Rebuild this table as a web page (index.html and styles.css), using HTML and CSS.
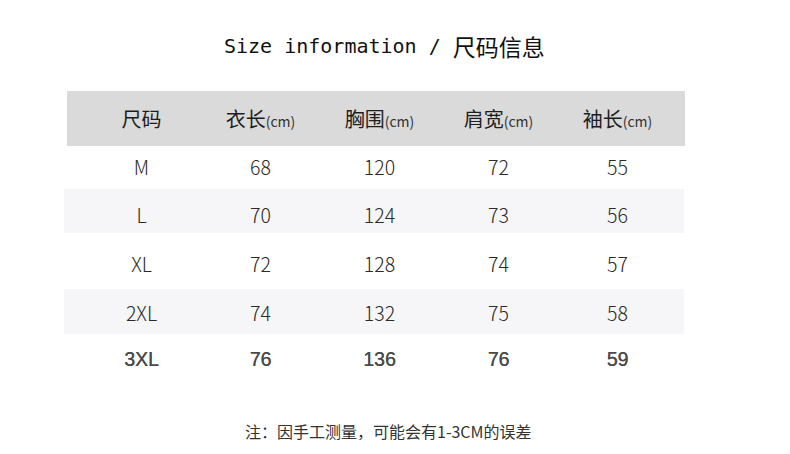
FILE: index.html
```html
<!DOCTYPE html>
<html lang="zh">
<head>
<meta charset="utf-8">
<link rel="stylesheet" href="styles.css">
</head>
<body>
<div class="page">
  <h1 class="title"><span class="latin">Size information / </span><span class="cjk">尺码信息</span></h1>
  <div class="table">
    <div class="row head">
      <div class="cell">尺码</div>
      <div class="cell">衣长<small>(cm)</small></div>
      <div class="cell">胸围<small>(cm)</small></div>
      <div class="cell">肩宽<small>(cm)</small></div>
      <div class="cell">袖长<small>(cm)</small></div>
    </div>
    <div class="row r1"><div class="cell">M</div><div class="cell">68</div><div class="cell">120</div><div class="cell">72</div><div class="cell">55</div></div>
    <div class="row r2 alt"><div class="cell">L</div><div class="cell">70</div><div class="cell">124</div><div class="cell">73</div><div class="cell">56</div></div>
    <div class="row r3"><div class="cell">XL</div><div class="cell">72</div><div class="cell">128</div><div class="cell">74</div><div class="cell">57</div></div>
    <div class="row r4 alt"><div class="cell">2XL</div><div class="cell">74</div><div class="cell">132</div><div class="cell">75</div><div class="cell">58</div></div>
    <div class="row r5 last"><div class="cell">3XL</div><div class="cell">76</div><div class="cell">136</div><div class="cell">76</div><div class="cell">59</div></div>
  </div>
  <p class="note">注：因手工测量，可能会有1-3CM的误差</p>
</div>
</body>
</html>
```

FILE: styles.css
```css
* { box-sizing: border-box; }
html, body { margin: 0; padding: 0; background: #fff; }
.page {
  width: 790px;
  height: 454px;
  padding-top: 30px;
  font-family: "Noto Sans CJK SC", "Noto Sans", sans-serif;
  color: #222;
}
.title {
  margin: 0;
  padding-left: 224px;
  height: 32px;
  line-height: 32px;
  font-weight: normal;
  white-space: pre;
  display: flex;
  align-items: center;
}
.title .latin {
  font-family: "DejaVu Sans Mono", monospace;
  font-size: 20px;
  color: #111;
}
.title .cjk {
  font-family: "Noto Sans CJK SC", sans-serif;
  font-size: 23px;
  color: #111;
}
.table {
  margin-top: 29px;
  margin-left: 64px;
  width: 620px;
}
.row {
  display: grid;
  grid-template-columns: repeat(5, 119px);
  padding-left: 18px;
  align-items: center;
}
.cell {
  text-align: center;
  white-space: nowrap;
}
.head {
  height: 55px;
  background: #dadada;
  margin-left: 3px;
  margin-right: -1px;
  padding-left: 15px;
  font-size: 20px;
  color: #1e1e1e;
}
.head small {
  font-size: 14px;
  color: #333;
}
.r1, .r2, .r3, .r4 {
  font-size: 19.5px;
  font-weight: 300;
  color: #2a2a2a;
}
.r1 { height: 43px; padding-bottom: 2px; }
.r2 { height: 44px; padding-top: 6px; }
.r3 { height: 56px; padding-top: 4px; }
.r4 { height: 45px; padding-top: 2px; }
.alt { background: #f6f6f8; }
.last {
  height: 51px;
  font-family: "Liberation Sans", Arial, sans-serif;
  font-size: 19.5px;
  font-weight: normal;
  color: #4a4a4a;
  text-shadow: 0.25px 0 0 #4a4a4a;
}
.note {
  margin: 34px 0 0;
  padding-left: 245px;
  font-size: 16px;
  color: #333;
}
```
